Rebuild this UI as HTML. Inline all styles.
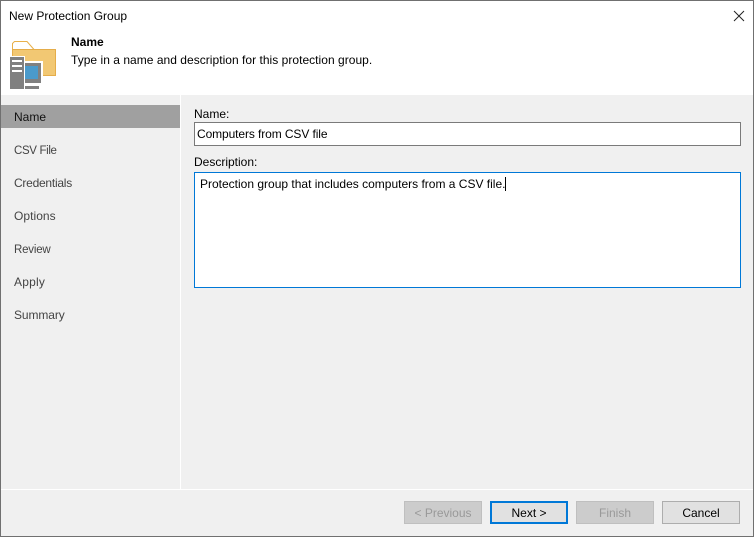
<!DOCTYPE html>
<html><head><meta charset="utf-8"><style>
html,body{margin:0;padding:0}
body{width:754px;height:537px;position:relative;overflow:hidden;background:#f0f0f0;font-family:"Liberation Sans",sans-serif;font-size:12px;color:#000}
div{position:absolute;box-sizing:border-box}
.t{white-space:nowrap;line-height:14px;height:14px}
.n{left:14px;color:#444}
.b{top:501px;width:78px;height:23px;border:1px solid #adadad;background:#e1e1e1;text-align:center;line-height:22px}
.d{background:#ccc;border-color:#bfbfbf;color:#999}
</style></head><body>
<div style="left:0;top:0;width:754px;height:95px;background:#fff"></div>
<div class="t" style="left:9px;top:9px;letter-spacing:0">New Protection Group</div>
<svg style="position:absolute;left:733px;top:10px" width="12" height="12"><path d="M1 1L11 11M11 1L1 11" stroke="#222" stroke-width="1" fill="none"/></svg>
<svg style="position:absolute;left:0;top:30px" width="70" height="70" shape-rendering="crispEdges">
<path d="M12.500 19.500V13.500l2-2H27l7 8" fill="#fff" stroke="#e8b04a" shape-rendering="auto"/>
<rect x="12" y="19" width="44" height="27" fill="#e5ad4a"/>
<rect x="13" y="20" width="42" height="25" fill="#f2c873"/>
<rect x="24" y="31" width="19" height="23" fill="#fff"/>
<rect x="25" y="33" width="16" height="20" fill="#808080"/>
<rect x="25" y="36" width="13" height="13" fill="#4a9acb"/>
<rect x="25" y="53" width="18" height="7" fill="#fff"/>
<rect x="25" y="56" width="14" height="3" fill="#808080"/>
<rect x="10" y="26" width="15" height="33" fill="#808080"/>
<rect x="10" y="26" width="14" height="1" fill="#fff"/>
<rect x="24" y="26" width="1" height="33" fill="#fff"/>
<rect x="12" y="30" width="10" height="2" fill="#fff"/>
<rect x="12" y="35" width="10" height="2" fill="#fff"/>
<rect x="12" y="40" width="10" height="2" fill="#fff"/>
</svg>
<div class="t" style="left:71px;top:35px;font-weight:bold">Name</div>
<div class="t" style="left:71px;top:53px;letter-spacing:.03px">Type in a name and description for this protection group.</div>

<div style="left:0;top:105px;width:180px;height:23px;background:#a0a0a0"></div>
<div style="left:180px;top:95px;width:1px;height:394px;background:#fff"></div>
<div class="t n" style="top:110px;color:#111">Name</div>
<div class="t n" style="top:144px;font-size:11.5px;letter-spacing:-.35px">CSV File</div>
<div class="t n" style="top:176px;letter-spacing:-.25px">Credentials</div>
<div class="t n" style="top:209px;letter-spacing:.05px">Options</div>
<div class="t n" style="top:243px;font-size:11.5px;letter-spacing:-.2px">Review</div>
<div class="t n" style="top:275px;letter-spacing:.2px">Apply</div>
<div class="t n" style="top:308px;letter-spacing:-.1px">Summary</div>

<div class="t" style="left:194px;top:107px">Name:</div>
<div class="t" style="left:194px;top:122px;width:547px;height:24px;background:#fff;border:1px solid #7a7a7a;padding:4px 0 0 2px;letter-spacing:-.1px;line-height:14px">Computers from CSV file</div>
<div class="t" style="left:194px;top:155px">Description:</div>
<div class="t" style="left:194px;top:172px;width:547px;height:116px;background:#fff;border:1px solid #0078d7;padding:4px 0 0 5px">Protection group that includes computers from a CSV file.<span style="display:inline-block;width:1px;height:14px;background:#000;vertical-align:-3px"></span></div>

<div style="left:0;top:489px;width:754px;height:1px;background:#fff"></div>
<div class="b d" style="left:404px">&lt; Previous</div>
<div class="b" style="left:490px;border:2px solid #0078d7;line-height:20px">Next &gt;</div>
<div class="b d" style="left:576px">Finish</div>
<div class="b" style="left:662px">Cancel</div>

<div style="left:0;top:0;width:754px;height:537px;border:1px solid #707070"></div>
</body></html>
